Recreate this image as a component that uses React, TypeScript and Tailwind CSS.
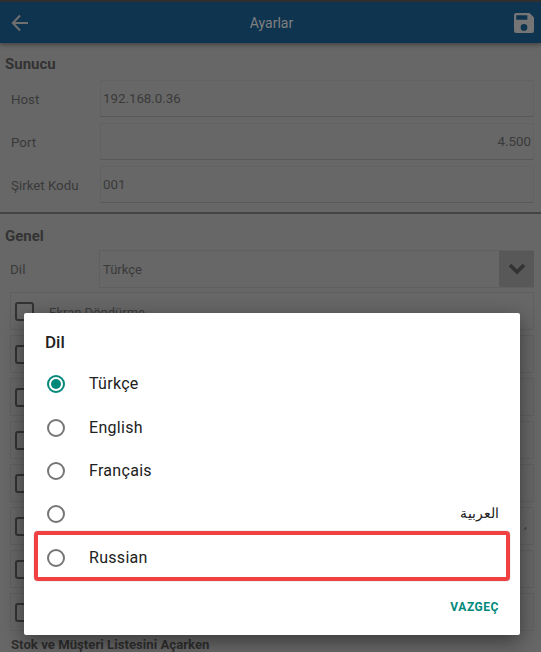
import React from "react";

const labelFont = "font-['Roboto',sans-serif]";

function Field({ label, value, right }: { label: string; value: string; right?: boolean }) {
  return (
    <div className="flex h-[37px] items-center">
      <div className="w-[100px] pl-[11px] pt-[2px] text-[13.3px] text-[#3a3a3a]">{label}</div>
      <div
        className={`flex h-full flex-1 items-center border border-[#626262] border-b-[#585858] pt-[1px] pl-[2px] pr-[2px] text-[13.3px] text-[#3a3a3a] ${
          right ? "justify-end" : ""
        }`}
      >
        {value}
      </div>
    </div>
  );
}

function CheckRow({ label, tail }: { label?: string; tail?: string }) {
  return (
    <div className="ml-[10px] flex h-[38px] items-center border border-[#606060] pl-[4px]">
      <div className="h-[19px] w-[19px] rounded-[3px] border-2 border-[#333333]" />
      {label && <span className="ml-[15px] pt-[3px] text-[13px] text-[#3a3a3a]">{label}</span>}
      {tail && <span className="ml-auto pr-[6px] text-[13px] text-[#3a3a3a]">{tail}</span>}
    </div>
  );
}

function Radio({
  label,
  checked,
  arabic,
  className = "",
}: {
  label: string;
  checked?: boolean;
  arabic?: boolean;
  className?: string;
}) {
  return (
    <div className={`flex h-[43px] items-center pl-[23px] pr-[21px] ${className}`}>
      <div
        className={`flex h-[18px] w-[18px] items-center justify-center rounded-full border-2 ${
          checked ? "border-[#00897b]" : "border-[#757575]"
        }`}
      >
        {checked && <div className="h-[10px] w-[10px] rounded-full bg-[#00897b]" />}
      </div>
      <span
        dir={arabic ? "rtl" : undefined}
        className={arabic ? "ml-auto text-[13.5px] text-[#212121]" : "ml-[24px] text-[16px] tracking-[0.3px] text-[#212121]"}
      >
        {label}
      </span>
    </div>
  );
}

export default function App() {
  return (
    <div className={`relative h-[652px] w-[541px] overflow-hidden bg-[#676767] ${labelFont}`}>
      <div className="h-[2px] bg-[#303030]" />
      <header className="flex h-[41px] items-center justify-between bg-[#0f344f] pl-[11px] pr-[7px] shadow-[0_2px_4px_rgba(0,0,0,0.35)]">
        <svg width="18" height="18" viewBox="0 0 18 18" fill="none" stroke="#6f6f6f" strokeWidth="2">
          <path d="M17 9H2M9 1.5 1.8 9 9 16.5" />
        </svg>
        <span className="pt-[2px] text-[14px] text-[#808080]">Ayarlar</span>
        <svg width="20" height="20" viewBox="3 3 18 18" fill="#757575">
          <path d="M17 3H5a2 2 0 0 0-2 2v14a2 2 0 0 0 2 2h14a2 2 0 0 0 2-2V7l-4-4zm-5 16a3 3 0 1 1 0-6 3 3 0 0 1 0 6zm3-10H5V5h10v4z" />
        </svg>
      </header>

      <section className="pr-[7px]">
        <h2 className="mt-[11px] h-[26px] pl-[5px] text-[15px] font-bold leading-[20px] text-[#333333]">Sunucu</h2>
        <div className="flex flex-col gap-[6px]">
          <Field label="Host" value="192.168.0.36" />
          <Field label="Port" value="4.500" right />
          <Field label="Şirket Kodu" value="001" />
        </div>
      </section>

      <div className="mt-[9px] h-[2px] bg-[#444444]" />

      <section className="pr-[7px]">
        <h2 className="mt-[12px] h-[24px] pl-[5px] text-[15px] font-bold leading-[20px] text-[#333333]">Genel</h2>
        <div className="flex h-[38px] items-center">
          <div className="w-[99px] pl-[10px] pt-[1px] text-[13.5px] text-[#3a3a3a]">Dil</div>
          <div className="flex h-full flex-1 items-center border border-r-0 border-[#606060] pl-[3px] text-[13px] text-[#3a3a3a]">
            <span className="pt-[1px]">Türkçe</span>
            <div className="ml-auto flex h-full w-[35px] items-center justify-center bg-[#585858]">
              <svg width="18" height="12" viewBox="0 0 18 12" fill="none" stroke="#333333" strokeWidth="3.6">
                <path d="M2 2l7 7 7-7" />
              </svg>
            </div>
          </div>
        </div>
        <div className="mt-[4px] flex flex-col gap-[5px]">
          <CheckRow label="Ekran Döndürme" />
          <CheckRow />
          <CheckRow />
          <CheckRow />
          <CheckRow />
          <CheckRow tail="،" />
          <CheckRow />
          <CheckRow />
        </div>
      </section>

      <div className="absolute left-[11px] top-[637px] text-[13.2px] font-bold leading-[15px] text-[#2e2e2e]">
        Stok ve Müşteri Listesini Açarken
      </div>

      <div className="absolute left-[24px] top-[313px] h-[322px] w-[496px] rounded-[2px] bg-white shadow-[0_6px_20px_rgba(0,0,0,0.45)]">
        <h3 className="pl-[21px] pt-[18px] text-[17px] font-medium leading-[22px] text-[#212121]">Dil</h3>
        <div className="mt-[9px]">
          <Radio label="Türkçe" checked />
          <Radio label="English" className="mt-[1px]" />
          <Radio label="Français" />
          <Radio label="العربية" arabic />
          <Radio label="Russian" className="mt-[1px]" />
        </div>
        <div className="flex justify-end pr-[21px] pt-[19px] text-[12px] font-bold tracking-[0.55px] text-[#00897b]">
          VAZGEÇ
        </div>
        <div className="absolute left-[10px] top-[218px] h-[50px] w-[476px] rounded-[4px] border-4 border-[#f04040] shadow-[0_0_1px_rgba(0,0,0,0.6)]" />
      </div>
    </div>
  );
}
